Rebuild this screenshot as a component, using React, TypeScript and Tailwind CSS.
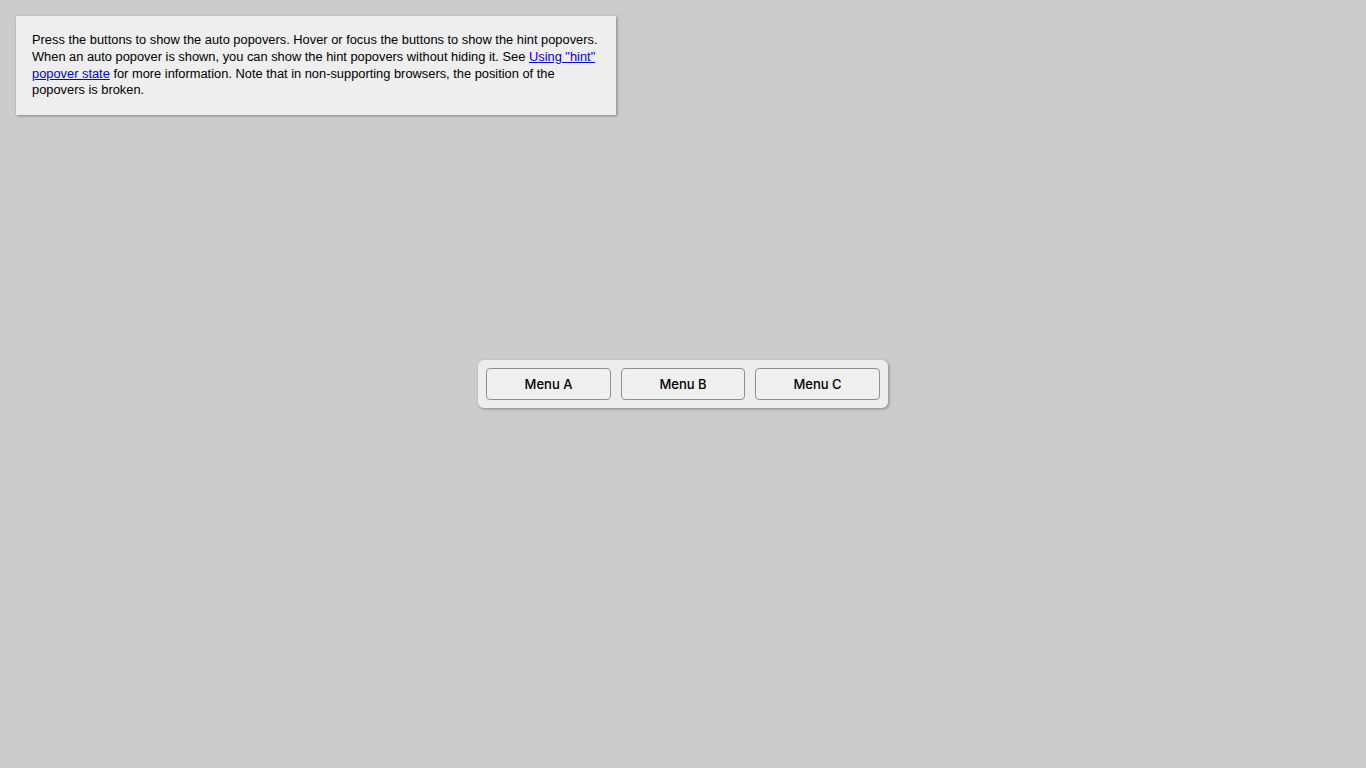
export default function App() {
  const menus = [
    { label: 'Menu A', width: 'w-[125px]' },
    { label: 'Menu B', width: 'w-[124px]' },
    { label: 'Menu C', width: 'w-[125px]' },
  ];

  return (
    <div className="relative h-screen w-full bg-[#cccccc]">
      <div className="absolute left-4 top-4 w-[600px] bg-[#eeeeee] p-4 shadow-[1px_1px_3px_rgba(0,0,0,0.35)]">
        <p className="font-['Liberation_Sans',Arial,sans-serif] text-[12.85px] leading-[16.75px] text-black">
          Press the buttons to show the auto popovers. Hover or focus the buttons to show the hint popovers. When an
          auto popover is shown, you can show the hint popovers without hiding it. See{' '}
          <a href="#" className="text-[#0000ee] underline">
            Using "hint" popover state
          </a>{' '}
          for more information. Note that in non-supporting browsers, the position of the popovers is broken.
        </p>
      </div>

      <div className="flex h-full items-center justify-center">
        <div className="flex gap-[10px] rounded-md bg-[#ededed] p-2 shadow-[1px_1px_3px_rgba(0,0,0,0.35)]">
          {menus.map((m) => (
            <button
              key={m.label}
              className={`h-8 ${m.width} rounded-[4px] border border-[#8f8f8f] bg-[#efefef] pt-px font-['Inter','Liberation_Sans',sans-serif] text-[13px] font-medium text-black`}
            >
              {m.label}
            </button>
          ))}
        </div>
      </div>
    </div>
  );
}
